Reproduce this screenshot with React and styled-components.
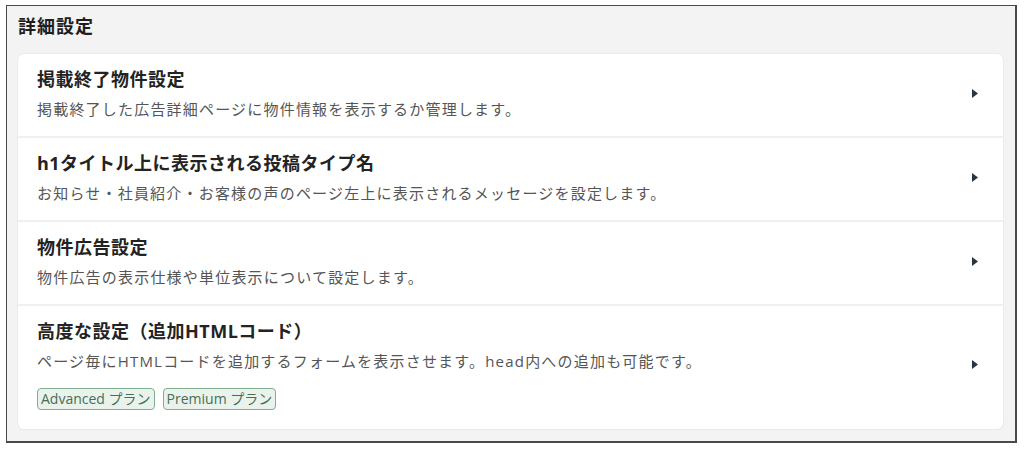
import React from "react";
import styled, { createGlobalStyle } from "styled-components";

const Global = createGlobalStyle`
  html, body { margin: 0; padding: 0; background: #ffffff; }
  body { font-family: "Open Sans", "Noto Sans CJK JP", sans-serif; }
  * { box-sizing: border-box; }
`;

const Page = styled.div`
  width: 1024px;
  height: 453px;
  padding: 5px 7px 10px 6px;
`;

const Frame = styled.section`
  height: 100%;
  border: 2px solid #4a4a4a;
  border-top-width: 1px;
  border-left-width: 1px;
  background: #f3f3f3;
  padding: 8px 12px 9px 11px;
  display: flex;
  flex-direction: column;
`;

const Heading = styled.h2`
  margin: 0;
  font-size: 18px;
  letter-spacing: 1px;
  font-weight: 700;
  color: #1e1e1e;
  line-height: 24px;
  height: 40px;
`;

const Card = styled.div`
  background: #ffffff;
  border-radius: 6px;
  box-shadow: 0 0 0 1px #ebebeb, 0 1px 2px rgba(0, 0, 0, 0.06);
  display: flex;
  flex-direction: column;
`;

const Row = styled.div`
  display: flex;
  align-items: center;
  padding: ${(p) => (p.$tall ? "13px 25px 19px 19px" : "13px 25px 17px 19px")};
  border-top: ${(p) => (p.$first ? "none" : "2px solid #f0f0f0")};
`;

const Text = styled.div`
  flex: 1;
  display: flex;
  flex-direction: column;
`;

const Title = styled.div`
  font-size: 18px;
  letter-spacing: 0.5px;
  font-weight: 700;
  color: #232323;
  line-height: 24px;
`;

const Desc = styled.div`
  font-size: 15px;
  letter-spacing: 1.2px;
  color: #555555;
  line-height: 20px;
  margin-top: 8px;
`;

const Badges = styled.div`
  display: flex;
  gap: 8px;
  margin-top: 17px;
`;

const Badge = styled.span`
  font-size: 14px;
  line-height: 20px;
  padding: 0 3px;
  color: #466e58;
  background: #e9f3ec;
  border: 1px solid #7fae90;
  border-radius: 4px;
`;

const Arrow = styled.svg`
  width: 6px;
  height: 9px;
  flex: none;
  fill: #2a3340;
`;

const items = [
  {
    title: "掲載終了物件設定",
    desc: "掲載終了した広告詳細ページに物件情報を表示するか管理します。",
  },
  {
    title: "h1タイトル上に表示される投稿タイプ名",
    desc: "お知らせ・社員紹介・お客様の声のページ左上に表示されるメッセージを設定します。",
  },
  {
    title: "物件広告設定",
    desc: "物件広告の表示仕様や単位表示について設定します。",
  },
  {
    title: "高度な設定（追加HTMLコード）",
    desc: "ページ毎にHTMLコードを追加するフォームを表示させます。head内への追加も可能です。",
    badges: ["Advanced プラン", "Premium プラン"],
  },
];

export default function App() {
  return (
    <Page>
      <Global />
      <Frame>
        <Heading>詳細設定</Heading>
        <Card>
          {items.map((it, i) => (
            <Row key={i} $first={i === 0} $tall={!!it.badges}>
              <Text>
                <Title>{it.title}</Title>
                <Desc>{it.desc}</Desc>
                {it.badges && (
                  <Badges>
                    {it.badges.map((b) => (
                      <Badge key={b}>{b}</Badge>
                    ))}
                  </Badges>
                )}
              </Text>
              <Arrow viewBox="0 0 6 9">
                <path d="M0 0 L6 4.5 L0 9 Z" />
              </Arrow>
            </Row>
          ))}
        </Card>
      </Frame>
    </Page>
  );
}
